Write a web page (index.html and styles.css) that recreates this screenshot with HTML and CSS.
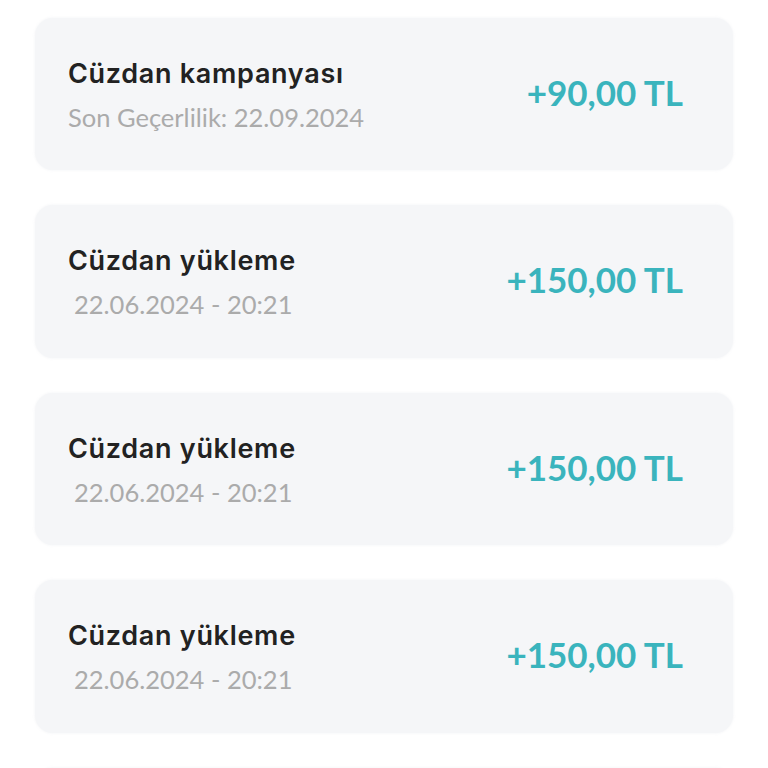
FILE: index.html
```html
<!DOCTYPE html>
<html lang="tr">
<head>
<meta charset="utf-8">
<title>Cüzdan hareketleri</title>
<link rel="stylesheet" href="styles.css">
</head>
<body>
<main class="list">
  <div class="card">
    <div class="info">
      <div class="title">Cüzdan kampanyası</div>
      <div class="sub">Son Geçerlilik: 22.09.2024</div>
    </div>
    <div class="amount">+90,00 TL</div>
  </div>
  <div class="card">
    <div class="info">
      <div class="title">Cüzdan yükleme</div>
      <div class="sub date">22.06.2024 - 20:21</div>
    </div>
    <div class="amount">+150,00 TL</div>
  </div>
  <div class="card">
    <div class="info">
      <div class="title">Cüzdan yükleme</div>
      <div class="sub date">22.06.2024 - 20:21</div>
    </div>
    <div class="amount">+150,00 TL</div>
  </div>
  <div class="card">
    <div class="info">
      <div class="title">Cüzdan yükleme</div>
      <div class="sub date">22.06.2024 - 20:21</div>
    </div>
    <div class="amount">+150,00 TL</div>
  </div>
  <div class="card card-peek"></div>
</main>
</body>
</html>
```

FILE: styles.css
```css
html, body {
  margin: 0;
  padding: 0;
  background: #ffffff;
  overflow: hidden;
}
body {
  font-family: "Lato", "Liberation Sans", sans-serif;
}
.list {
  display: flex;
  flex-direction: column;
  gap: 35px;
  padding: 17.5px 35px 0 35px;
}
.card {
  height: 152.5px;
  box-sizing: border-box;
  background: #f5f6f8;
  border-radius: 18px;
  display: flex;
  align-items: center;
  justify-content: space-between;
  padding: 0 50px 0 33px;
  flex-shrink: 0;
  box-shadow: 0 0 3px rgba(240, 241, 244, 0.9);
}
.info {
  display: flex;
  flex-direction: column;
  gap: 12px;
  margin-top: 2px;
}
.title {
  font-family: "Inter", "Lato", sans-serif;
  font-size: 27px;
  line-height: 32px;
  font-weight: 600;
  color: #222222;
  letter-spacing: 0.7px;
}
.sub {
  font-size: 25.5px;
  line-height: 30px;
  font-weight: 400;
  color: #ababab;
}
.date {
  padding-left: 6px;
}
.amount {
  font-size: 35px;
  line-height: 40px;
  font-weight: 700;
  color: #3ab4bd;
  margin-top: -4px;
}
```
